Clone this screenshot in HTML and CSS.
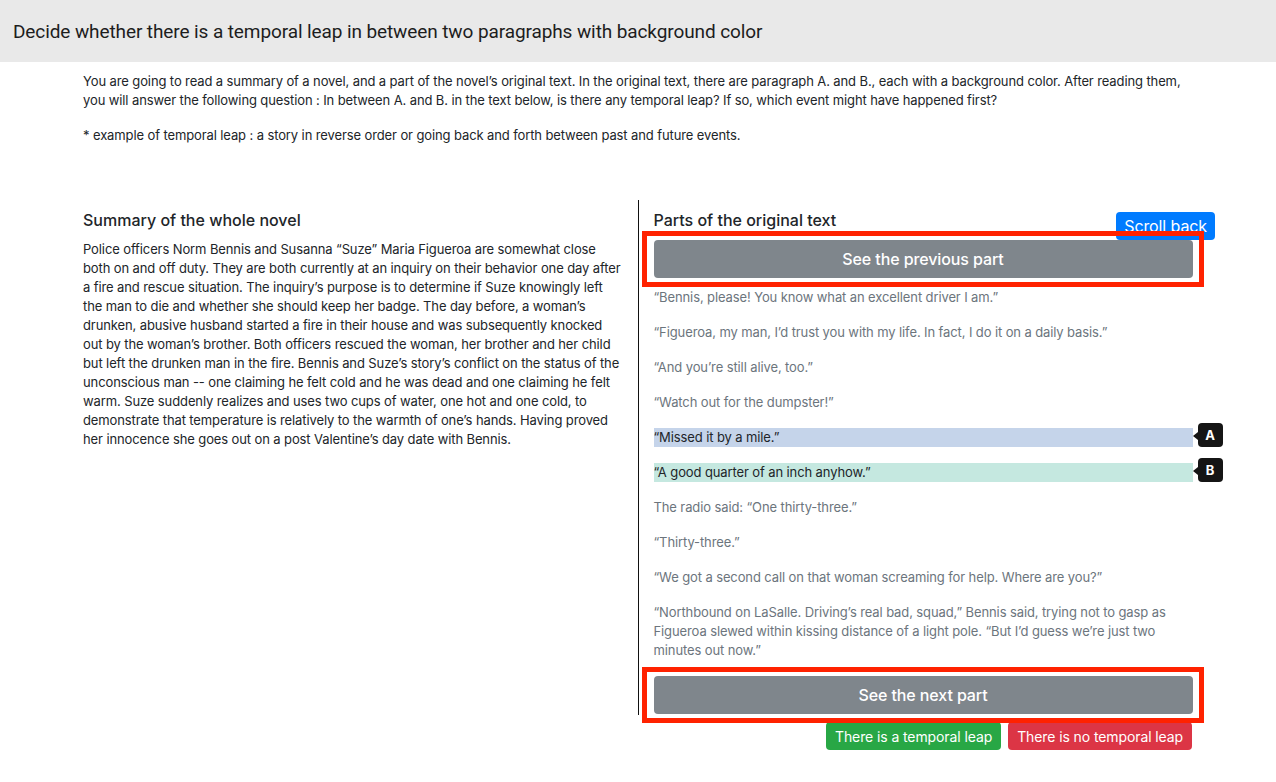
FILE: index.html
```html
<!DOCTYPE html>
<html>
<head>
  <meta charset="UTF-8">
  <meta name="viewport" content="width=device-width, initial-scale=1.0">
  <title>Temporal Leap</title>
  <link rel="stylesheet" href="styles.css">
</head>
<body>
  <header class="topbar">
    <h1>Decide whether there is a temporal leap in between two paragraphs with background color</h1>
  </header>

  <div class="container">
    <div class="intro">
      <p>You are going to read a summary of a novel, and a part of the novel’s original text. In the original text, there are paragraph A. and B., each with a background color. After reading them, you will answer the following question : In between A. and B. in the text below, is there any temporal leap? If so, which event might have happened first?</p>
      <p>* example of temporal leap : a story in reverse order or going back and forth between past and future events.</p>
    </div>

    <div class="row">
      <div class="col col-summary">
        <h5>Summary of the whole novel</h5>
        <p>Police officers Norm Bennis and Susanna “Suze” Maria Figueroa are somewhat close both on and off duty. They are both currently at an inquiry on their behavior one day after a fire and rescue situation. The inquiry’s purpose is to determine if Suze knowingly left the man to die and whether she should keep her badge. The day before, a woman’s drunken, abusive husband started a fire in their house and was subsequently knocked out by the woman’s brother. Both officers rescued the woman, her brother and her child but left the drunken man in the fire. Bennis and Suze’s story’s conflict on the status of the unconscious man -- one claiming he felt cold and he was dead and one claiming he felt warm. Suze suddenly realizes and uses two cups of water, one hot and one cold, to demonstrate that temperature is relatively to the warmth of one’s hands. Having proved her innocence she goes out on a post Valentine’s day date with Bennis.</p>
      </div>

      <div class="col col-text">
        <h5>Parts of the original text</h5>
        <button class="btn btn-scroll">Scroll back</button>

        <div class="marked">
          <button class="btn btn-part">See the previous part</button>
        </div>

        <p class="line">“Bennis, please! You know what an excellent driver I am.”</p>
        <p class="line">“Figueroa, my man, I’d trust you with my life. In fact, I do it on a daily basis.”</p>
        <p class="line">“And you’re still alive, too.”</p>
        <p class="line">“Watch out for the dumpster!”</p>
        <p class="line hl hl-a">“Missed it by a mile.”<span class="tag">A</span></p>
        <p class="line hl hl-b">“A good quarter of an inch anyhow.”<span class="tag">B</span></p>
        <p class="line">The radio said: “One thirty-three.”</p>
        <p class="line">“Thirty-three.”</p>
        <p class="line">“We got a second call on that woman screaming for help. Where are you?”</p>
        <p class="line">“Northbound on LaSalle. Driving’s real bad, squad,” Bennis said, trying not to gasp as Figueroa slewed within kissing distance of a light pole. “But I’d guess we’re just two minutes out now.”</p>

        <div class="marked marked-last">
          <button class="btn btn-part">See the next part</button>
        </div>
      </div>
    </div>

    <div class="answer">
      <button class="btn btn-yes">There is a temporal leap</button>
      <button class="btn btn-no">There is no temporal leap</button>
    </div>
  </div>
</body>
</html>
```

FILE: styles.css
```css
body {
  margin: 0;
  font-family: Inter, "Noto Sans", sans-serif;
  font-size: 13px;
  line-height: 19px;
  letter-spacing: -0.11px;
  color: #212529;
  background-color: #fff;
}
.topbar {
  height: 62px;
  background-color: #e9e9e9;
  display: flex;
  align-items: center;
  padding-left: 13px;
}
.topbar h1 {
  margin: 0;
  font-family: Roboto, sans-serif;
  font-size: 19px;
  font-weight: 400;
  letter-spacing: -0.1px;
  color: #1d1d1d;
}
.container {
  max-width: 1110px;
  margin: 0 auto;
  padding: 0 15px;
}
.intro {
  padding-top: 10px;
}
p {
  margin: 0 0 16px;
}
.row {
  display: flex;
  margin: 55px -15px 0;
}
.col {
  flex: 1 1 0;
  padding: 10px 15px 1px;
  min-width: 0;
}
.col-summary {
  border-right: 1px solid #111;
}
.col-text {
  position: relative;
}
h5 {
  margin: 0 0 10px;
  font-size: 16px;
  line-height: 20px;
  font-weight: 500;
  letter-spacing: 0;
  color: #212529;
}
.btn {
  font-family: Inter, "Noto Sans", sans-serif;
  letter-spacing: -0.1px;
  border: none;
  border-radius: 4px;
  color: #fff;
  cursor: pointer;
}
.btn-scroll {
  position: absolute;
  top: 12px;
  right: -7px;
  z-index: 1;
  height: 28px;
  padding: 0 8px;
  font-size: 16px;
  background-color: #007bff;
}
.marked {
  position: relative;
  margin-bottom: 10px;
}
.marked-last {
  margin-bottom: 0;
}
.marked::after {
  content: "";
  position: absolute;
  top: -9px;
  bottom: -9px;
  left: -12px;
  right: -11px;
  border: 5px solid #ff2200;
  z-index: 2;
  pointer-events: none;
}
.btn-part {
  display: block;
  width: 539px;
  height: 38px;
  font-size: 16px;
  font-weight: 500;
  background-color: #7f868c;
}
.line {
  color: #6c757d;
}
.hl {
  position: relative;
  width: 539px;
  color: #212529;
}
.hl-a {
  background-color: #c5d4ea;
}
.hl-b {
  background-color: #c5e8e0;
}
.tag {
  position: absolute;
  left: calc(100% + 5px);
  bottom: 0;
  width: 25px;
  height: 24px;
  line-height: 24px;
  text-align: center;
  background-color: #151515;
  color: #fff;
  font-weight: 700;
  font-size: 13px;
  border-radius: 4px;
}
.tag::before {
  content: "";
  position: absolute;
  left: -5px;
  top: 9px;
  border-style: solid;
  border-width: 4px 5px 4px 0;
  border-color: transparent #151515 transparent transparent;
}
.answer {
  display: flex;
  justify-content: flex-end;
  gap: 7px;
  margin: 7px 1px 0 0;
}
.btn-yes,
.btn-no {
  height: 28px;
  padding: 0 9px;
  font-size: 14px;
}
.btn-yes {
  background-color: #28a745;
}
.btn-no {
  background-color: #dc3545;
}
```
